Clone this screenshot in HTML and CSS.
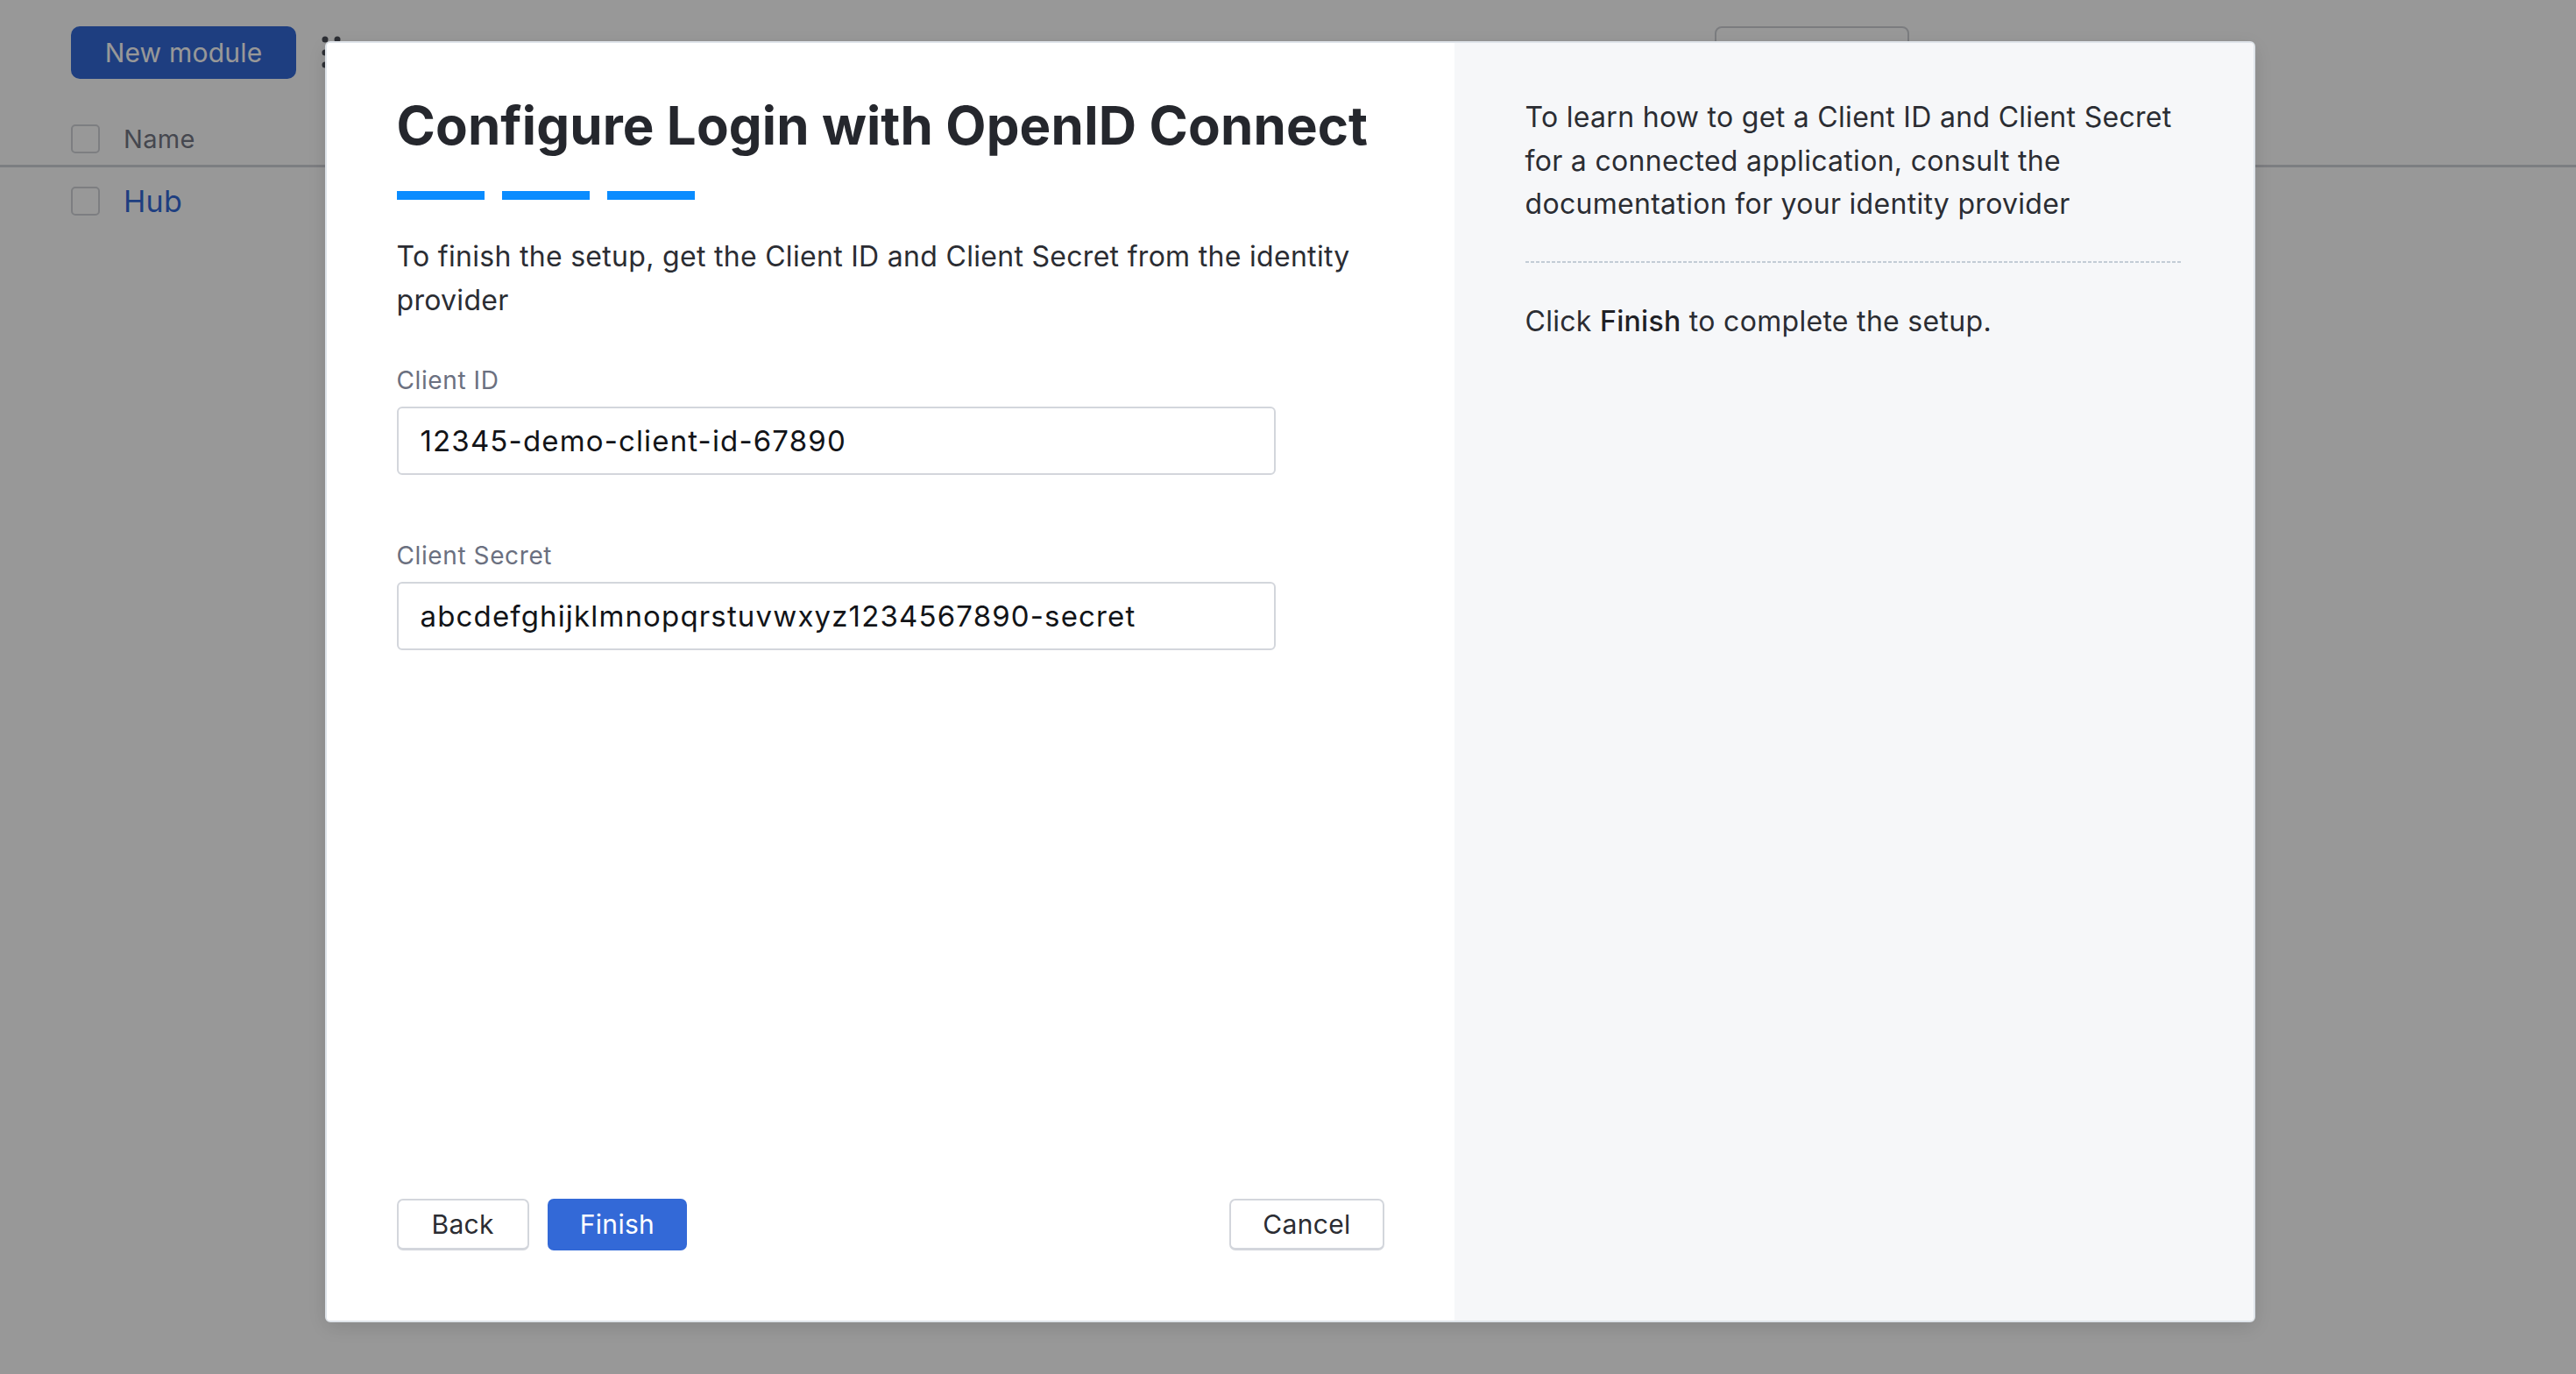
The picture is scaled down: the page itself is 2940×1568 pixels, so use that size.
FILE: index.html
```html
<!DOCTYPE html>
<html lang="en">
<head>
<meta charset="utf-8">
<title>Configure Login with OpenID Connect</title>
<link rel="stylesheet" href="styles.css">
</head>
<body>
<div class="page">
  <div class="toolbar">
    <button class="btn-primary-bg">New module</button>
    <svg class="grip" width="22" height="38" viewBox="0 0 22 38" aria-hidden="true">
      <circle cx="4" cy="4" r="3.5"/><circle cx="18" cy="4" r="3.5"/>
      <circle cx="4" cy="19" r="3.5"/><circle cx="18" cy="19" r="3.5"/>
      <circle cx="4" cy="33" r="3.5"/><circle cx="18" cy="33" r="3.5"/>
    </svg>
    <button class="btn-outline-bg"></button>
  </div>
  <div class="table">
    <div class="row head">
      <span class="check"></span>
      <span class="col-name">Name</span>
    </div>
    <div class="row item">
      <span class="check"></span>
      <span class="link">Hub</span>
    </div>
  </div>
</div>

<div class="overlay">
  <div class="modal">
    <div class="main">
      <h1 class="title">Configure Login with OpenID Connect</h1>
      <div class="steps">
        <span class="step"></span><span class="step"></span><span class="step"></span>
      </div>
      <p class="desc">To finish the setup, get the Client ID and Client Secret from the identity provider</p>
      <label class="label first">Client ID</label>
      <div class="input">12345-demo-client-id-67890</div>
      <label class="label">Client Secret</label>
      <div class="input">abcdefghijklmnopqrstuvwxyz1234567890-secret</div>
      <div class="footer">
        <button class="btn">Back</button>
        <button class="btn primary">Finish</button>
        <button class="btn cancel">Cancel</button>
      </div>
    </div>
    <div class="side">
      <p class="side-text">To learn how to get a Client ID and Client Secret for a connected application, consult the documentation for your identity provider</p>
      <div class="dots"></div>
      <p class="side-text">Click <strong>Finish</strong> to complete the setup.</p>
    </div>
  </div>
</div>
</body>
</html>
```

FILE: styles.css
```css
* { box-sizing: border-box; }

html, body {
  margin: 0;
  padding: 0;
  background: #ffffff;
  font-family: Inter, "Noto Sans", "Liberation Sans", sans-serif;
  color: #2b2d33;
}

.page {
  width: 2940px;
  height: 1568px;
  padding-top: 30px;
}

.toolbar {
  display: flex;
  align-items: center;
  height: 60px;
  padding-left: 81px;
  width: 2179px;
}

.btn-primary-bg {
  height: 60px;
  width: 257px;
  border: none;
  border-radius: 10px;
  background: #3369d7;
  color: #ffffff;
  font-family: inherit;
  font-size: 30px;
  letter-spacing: 0.2px;
}

.grip {
  margin-left: 29px;
  fill: #4b4f58;
}

.btn-outline-bg {
  margin-left: auto;
  width: 222px;
  height: 60px;
  border: 2px solid #cfd1d6;
  border-radius: 8px;
  background: #ffffff;
}

.table {
  margin-top: 38px;
}

.row {
  display: flex;
  align-items: center;
  gap: 27px;
  padding-left: 81px;
}

.row.head {
  height: 63px;
  border-bottom: 3px solid #d1d3d8;
}

.row.item {
  height: 76px;
}

.check {
  width: 33px;
  height: 33px;
  border: 2px solid #d2d4d9;
  border-radius: 5px;
  background: #ffffff;
}

.col-name {
  font-size: 29px;
  color: #757885;
  letter-spacing: 0.3px;
}

.link {
  font-size: 34px;
  color: #3369d7;
  letter-spacing: 0.3px;
}

/* Modal */
.overlay {
  position: fixed;
  inset: 0;
  background: rgba(0, 0, 0, 0.405);
  display: flex;
  justify-content: center;
  align-items: flex-start;
  padding-top: 47px;
  padding-left: 4px;
}

.modal {
  width: 2203px;
  height: 1462px;
  display: flex;
  border: 2px solid #dfe4ea;
  border-radius: 6px;
  overflow: hidden;
  background: #ffffff;
  box-shadow: 0 6px 24px rgba(0, 0, 0, 0.12);
}

.main {
  width: 1287px;
  flex: none;
  display: flex;
  flex-direction: column;
  align-items: flex-start;
  padding: 58px 80px 80px 80px;
  background: #ffffff;
}

.title {
  margin: 0;
  font-size: 60px;
  line-height: 72px;
  font-weight: 700;
  color: #25272d;
  letter-spacing: 0.1px;
}

.steps {
  display: flex;
  gap: 20px;
  margin-top: 39px;
}

.step {
  width: 100px;
  height: 10px;
  background: #0a8cff;
}

.desc {
  margin: 40px 0 0 0;
  font-size: 32px;
  line-height: 49.5px;
  letter-spacing: 0.3px;
  color: #2b2d33;
}

.label {
  display: block;
  margin-top: 72px;
  font-size: 28px;
  line-height: 40px;
  letter-spacing: 0.6px;
  color: #6b7080;
}

.label.first {
  margin-top: 47px;
}

.input {
  margin-top: 10px;
  width: 1003px;
  height: 78px;
  border: 2px solid #d3d6dc;
  border-radius: 6px;
  padding: 0 25px;
  display: flex;
  align-items: center;
  font-size: 33px;
  letter-spacing: 1.15px;
  color: #121418;
  background: #ffffff;
}

.footer {
  margin-top: auto;
  width: 100%;
  display: flex;
  align-items: center;
  gap: 21px;
}

.btn {
  height: 59px;
  padding: 0 38px;
  border: 2px solid #d3d6dc;
  border-bottom-width: 3px;
  border-radius: 7px;
  background: #ffffff;
  color: #2b2d33;
  font-family: inherit;
  font-size: 30px;
  letter-spacing: 0.3px;
}

.btn.primary {
  background: #3369d7;
  border-color: #3369d7;
  color: #ffffff;
  padding: 0 35px;
}

.btn.cancel {
  margin-left: auto;
  padding: 0 36px;
}

.side {
  flex: 1;
  background: #f6f7f9;
  padding: 60px 81px 0 81px;
}

.side-text {
  margin: 0;
  font-size: 32px;
  line-height: 49.5px;
  letter-spacing: 0.3px;
  color: #2b2d33;
}

.side-text strong {
  font-weight: 500;
  color: #1f2126;
}

.dots {
  margin: 40px 0 42px 0;
  height: 2px;
  background: repeating-linear-gradient(90deg, #c3ccd6 0 4px, transparent 4px 6px);
}
```
